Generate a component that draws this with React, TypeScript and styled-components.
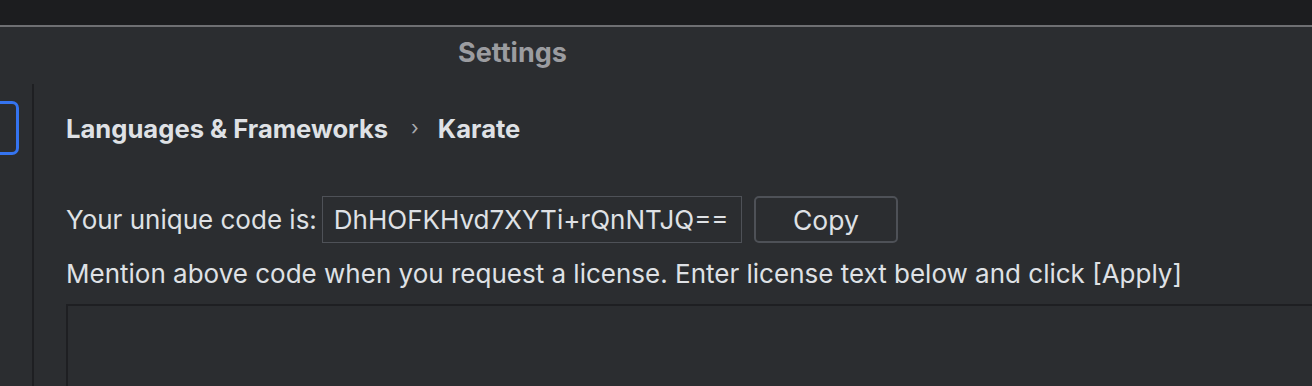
import React, { FunctionComponent } from 'react';
import styled, { createGlobalStyle } from 'styled-components';

const GlobalStyle = createGlobalStyle`
  html, body {
    margin: 0;
    padding: 0;
    background: #2b2d30;
    overflow: hidden;
  }
  body {
    font-family: Inter, "Noto Sans", "Liberation Sans", sans-serif;
  }
`;

const Window = styled.div`
  width: 1312px;
  height: 386px;
  display: flex;
  flex-direction: column;
  background: #2b2d30;
  overflow: hidden;
`;

const TopStrip = styled.div`
  height: 25px;
  flex-shrink: 0;
  background: #1c1d1f;
  border-bottom: 2px solid #6e6f72;
`;

const TitleBar = styled.div`
  height: 57px;
  box-sizing: border-box;
  padding: 0 0 6px 458px;
  flex-shrink: 0;
  display: flex;
  align-items: center;
  font-size: 27px;
  font-weight: 700;
  color: #9b9ca0;
`;

const Body = styled.div`
  flex: 1;
  display: flex;
  min-height: 0;
`;

const Sidebar = styled.div`
  width: 32px;
  flex-shrink: 0;
  padding-top: 17px;
  overflow: hidden;
  border-right: 2px solid #1e1f22;
`;

const SearchField = styled.div`
  width: 60px;
  height: 54px;
  margin-left: -41px;
  box-sizing: border-box;
  border: 3px solid #3574f0;
  border-radius: 7px;
`;

const Content = styled.div`
  flex: 1;
  display: flex;
  flex-direction: column;
  padding: 25px 0 0 32px;
  color: #dfe1e5;
  font-size: 26px;
`;

const Breadcrumbs = styled.div`
  display: flex;
  align-items: center;
  height: 38px;
  font-size: 25.6px;
  font-weight: 700;
`;

const Chevron = styled.span`
  margin: 0 19px 0 23px;
  font-weight: 400;
  font-size: 20px;
  color: #a8aaae;
`;

const CodeRow = styled.div`
  display: flex;
  align-items: center;
  margin-top: 49px;
  height: 47px;
`;

const CodeField = styled.div`
  height: 47px;
  width: 420px;
  box-sizing: border-box;
  margin-left: 5px;
  padding: 0 11px;
  display: flex;
  align-items: center;
  border: 1px solid #4e5157;
  background: #2b2d30;
`;

const CopyButton = styled.button`
  height: 47px;
  width: 144px;
  margin-left: 12px;
  box-sizing: border-box;
  border: 2px solid #4e5157;
  border-radius: 5px;
  background: transparent;
  color: #dfe1e5;
  font-family: inherit;
  font-size: 26.5px;
`;

const Hint = styled.div`
  margin-top: 14px;
  height: 34px;
  line-height: 34px;
`;

const LicenseArea = styled.div`
  flex: 1;
  margin-top: 13px;
  border-top: 2px solid #1e1f22;
  border-left: 2px solid #1e1f22;
`;

const App: FunctionComponent = () => (
  <Window>
    <GlobalStyle />
    <TopStrip />
    <TitleBar>Settings</TitleBar>
    <Body>
      <Sidebar>
        <SearchField />
      </Sidebar>
      <Content>
        <Breadcrumbs>
          Languages &amp; Frameworks
          <Chevron>›</Chevron>
          Karate
        </Breadcrumbs>
        <CodeRow>
          Your unique code is:
          <CodeField>DhHOFKHvd7XYTi+rQnNTJQ==</CodeField>
          <CopyButton>Copy</CopyButton>
        </CodeRow>
        <Hint>
          Mention above code when you request a license. Enter license text
          below and click [Apply]
        </Hint>
        <LicenseArea />
      </Content>
    </Body>
  </Window>
);

export default App;
